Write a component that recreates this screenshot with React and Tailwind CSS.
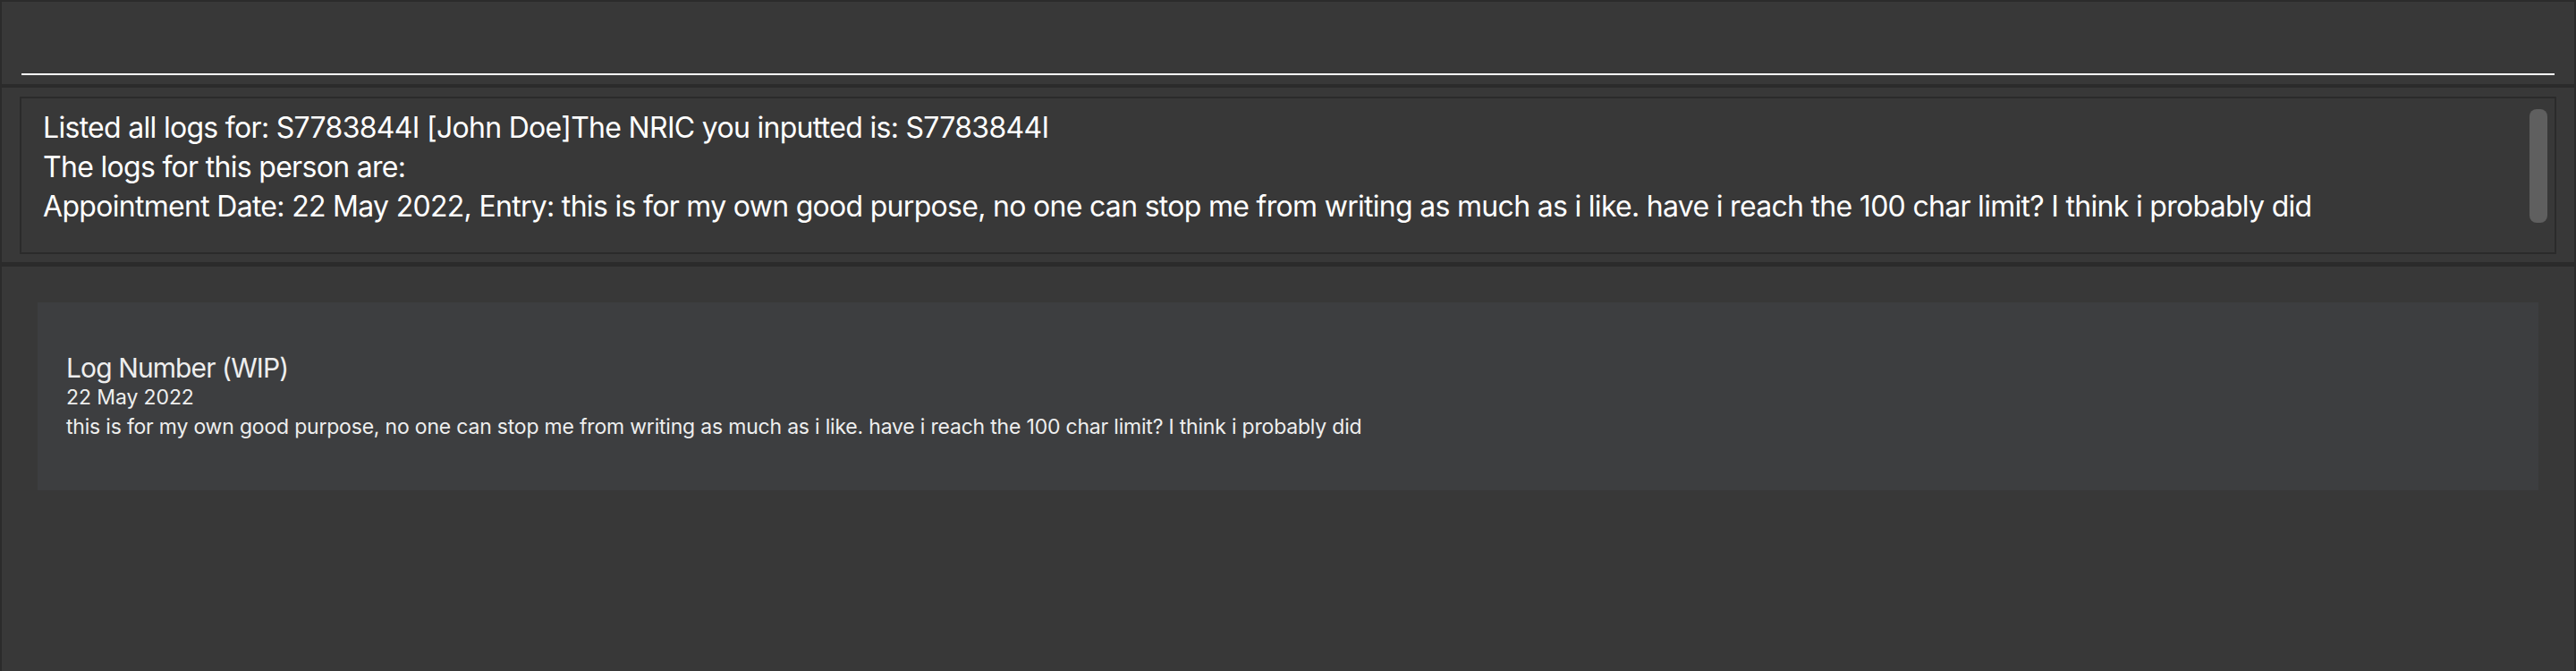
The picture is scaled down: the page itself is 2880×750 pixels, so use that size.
import React from "react";

const result = [
  "Listed all logs for: S7783844I [John Doe]The NRIC you inputted is: S7783844I",
  "The logs for this person are:",
  "Appointment Date: 22 May 2022, Entry: this is for my own good purpose, no one can stop me from writing as much as i like. have i reach the 100 char limit? I think i probably did",
];

const log = {
  title: "Log Number (WIP)",
  date: "22 May 2022",
  entry:
    "this is for my own good purpose, no one can stop me from writing as much as i like. have i reach the 100 char limit? I think i probably did",
};

export default function App() {
  return (
    <div
      className="h-[750px] w-[2880px] flex flex-col bg-[#383838] border-t-2 border-l-2 border-r-2 border-[#2b2b2b] overflow-hidden"
      style={{ fontFamily: "Inter, 'Noto Sans', sans-serif" }}
    >
      {/* Command box */}
      <div className="h-[92px] shrink-0 px-[22px] flex flex-col justify-end pb-[10px]">
        <div className="h-[2px] bg-white" />
      </div>

      <div className="h-[4px] shrink-0 bg-[#2b2b2b]" />

      {/* Result display */}
      <div className="h-[195px] shrink-0 px-[20px] pt-[10px] pb-[9px]">
        <div className="h-full border-2 border-[#2b2b2b] flex">
          <div className="flex-1 pl-[24px] pt-[11px] text-white text-[32px] leading-[44px] tracking-[-0.7px] whitespace-nowrap overflow-hidden">
            {result.map((line, i) => (
              <div key={i}>{line}</div>
            ))}
          </div>
          <div className="w-[20px] mr-[8px] pt-[12px]">
            <div className="h-[127px] rounded-lg bg-[#5f5f5f]" />
          </div>
        </div>
      </div>

      <div className="h-[5px] shrink-0 bg-[#2b2b2b]" />

      {/* Log list */}
      <div className="flex-1 p-[40px]">
        <div className="h-[210px] bg-[#3d3e40] px-[32px] flex flex-col justify-center text-[#eeeeee]">
          <div className="text-[30px] leading-[36px] tracking-[-0.9px]">{log.title}</div>
          <div className="text-[23px] leading-[31px] tracking-[-0.1px]">{log.date}</div>
          <div className="text-[23px] leading-[34px] tracking-[-0.2px]">{log.entry}</div>
        </div>
      </div>
    </div>
  );
}
